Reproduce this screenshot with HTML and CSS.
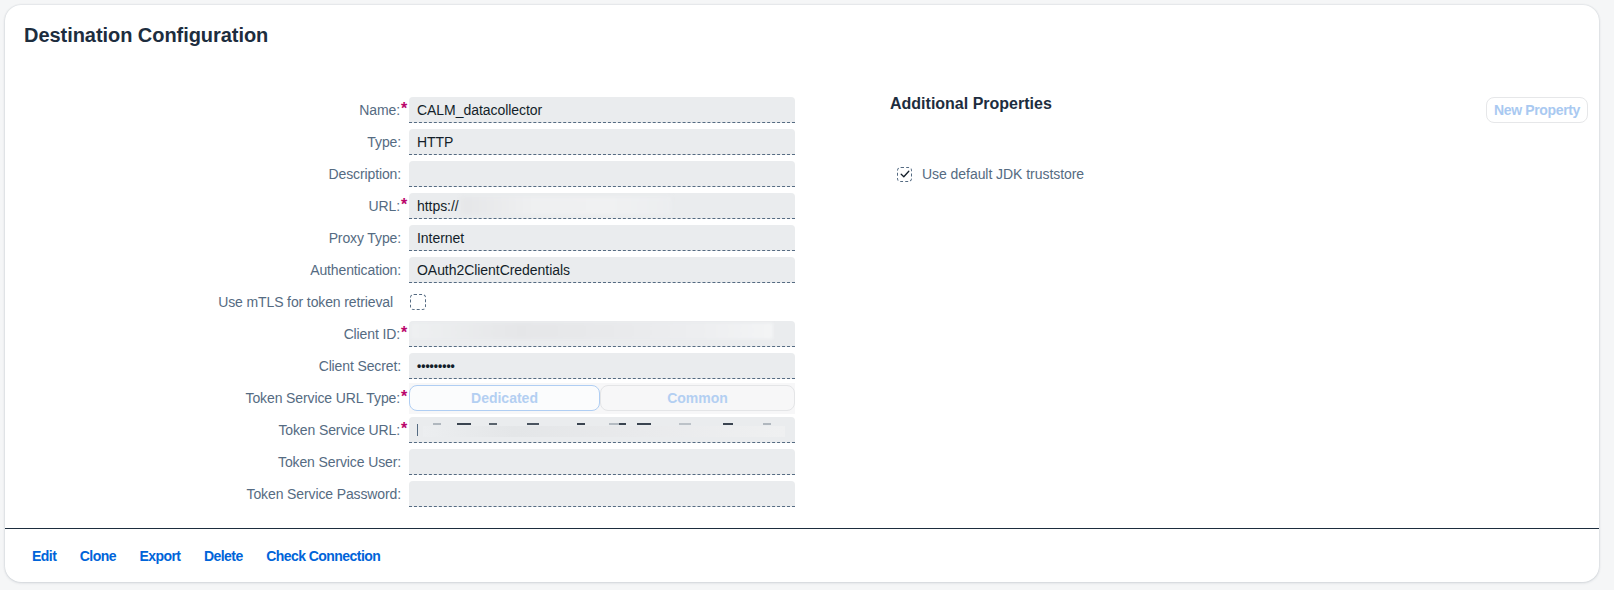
FILE: index.html
```html
<!DOCTYPE html>
<html lang="en">
<head>
<meta charset="utf-8">
<title>Destination Configuration</title>
<link rel="stylesheet" href="styles.css">
</head>
<body>
<div class="card">
  <header class="card-header">
    <h1 class="title">Destination Configuration</h1>
  </header>
  <div class="content">
    <div class="form">
      <div class="lbl req">Name:</div>
      <div class="field">CALM_datacollector</div>

      <div class="lbl">Type:</div>
      <div class="field">HTTP</div>

      <div class="lbl">Description:</div>
      <div class="field"></div>

      <div class="lbl req">URL:</div>
      <div class="field">https://<span class="smudge smudge-url"></span></div>

      <div class="lbl">Proxy Type:</div>
      <div class="field">Internet</div>

      <div class="lbl">Authentication:</div>
      <div class="field">OAuth2ClientCredentials</div>

      <div class="lbl lbl-check">Use mTLS for token retrieval</div>
      <div class="check-cell"><span class="cb"></span></div>

      <div class="lbl req">Client ID:</div>
      <div class="field"><span class="smudge smudge-id"></span></div>

      <div class="lbl">Client Secret:</div>
      <div class="field secret">•••••••••</div>

      <div class="lbl req">Token Service URL Type:</div>
      <div class="segmented">
        <span class="seg seg-selected">Dedicated</span>
        <span class="seg">Common</span>
      </div>

      <div class="lbl req">Token Service URL:</div>
      <div class="field"><span class="caret"></span><span class="smudge smudge-token"></span></div>

      <div class="lbl">Token Service User:</div>
      <div class="field"></div>

      <div class="lbl">Token Service Password:</div>
      <div class="field"></div>
    </div>

    <div class="side">
      <div class="side-head">
        <h2 class="side-title">Additional Properties</h2>
        <button class="btn-ghost" type="button" disabled>New Property</button>
      </div>
      <div class="check-row">
        <span class="cb">
          <svg width="12" height="12" viewBox="0 0 12 12" aria-hidden="true"><polyline points="2.2,6.3 4.8,8.8 9.8,3.2" fill="none" stroke="#131e29" stroke-width="1.3" stroke-linecap="round" stroke-linejoin="round"/></svg>
        </span>
        <span class="check-text">Use default JDK truststore</span>
      </div>
    </div>
  </div>
  <div class="divider"></div>
  <footer class="toolbar">
    <a class="link" href="#">Edit</a>
    <a class="link" href="#">Clone</a>
    <a class="link" href="#">Export</a>
    <a class="link" href="#">Delete</a>
    <a class="link" href="#">Check Connection</a>
  </footer>
</div>
</body>
</html>
```
FILE: styles.css
```css
* { box-sizing: border-box; }

html, body { height: 100%; }

body {
  margin: 0;
  padding: 5px 15px 8px 5px;
  background: #f5f6f7;
  font-family: "Liberation Sans", Arial, sans-serif;
  font-size: 14px;
  color: #131e29;
}

.card {
  height: 577px;
  background: #ffffff;
  border-radius: 16px;
  box-shadow: 0 0 2px rgba(34, 53, 72, 0.18), 0 1px 3px rgba(34, 53, 72, 0.12);
  display: flex;
  flex-direction: column;
}

.card-header {
  padding: 18px 19px 46px 19px;
}

.title {
  margin: 0;
  font-size: 20px;
  line-height: 24px;
  font-weight: 700;
  color: #1d2d3e;
  letter-spacing: -0.05px;
}

.content {
  display: flex;
  padding-bottom: 21px;
}

.form {
  width: 790px;
  padding-top: 4px;
  display: grid;
  grid-template-columns: 404px 386px;
  grid-auto-rows: 26px;
  row-gap: 6px;
}

.lbl {
  display: flex;
  align-items: center;
  justify-content: flex-end;
  padding-right: 8px;
  color: #556b82;
  letter-spacing: -0.12px;
  white-space: nowrap;
}

.lbl.req {
  padding-right: 0;
}

.lbl.req::after {
  content: "*";
  display: inline-block;
  width: 8px;
  margin-left: 1px;
  color: #ba066c;
  font-weight: 700;
  font-size: 16px;
  position: relative;
  top: -1px;
}

.lbl-check {
  padding-right: 16px;
}

.field {
  position: relative;
  display: flex;
  align-items: center;
  padding: 0 8px;
  background: #eaecee;
  border-radius: 4px 4px 0 0;
  border-bottom: 1px dashed #556b82;
  color: #131e29;
  letter-spacing: -0.05px;
  white-space: nowrap;
  overflow: hidden;
}

.secret {
  font-size: 12px;
  font-weight: 700;
  letter-spacing: 0;
}

.smudge {
  position: absolute;
  pointer-events: none;
}

.smudge-url {
  left: 52px;
  top: 4px;
  width: 210px;
  height: 18px;
  background: linear-gradient(90deg, #e5e6e8 0%, #eff0f1 35%, #f0f1f2 70%, #eceef0 100%);
  filter: blur(2px);
}

.smudge-id {
  left: 2px;
  top: 2px;
  width: 362px;
  height: 16px;
  background: linear-gradient(90deg, #eef0f1 0%, #e5e6e8 30%, #e8e9eb 55%, #edeef0 80%, #f3f4f5 100%);
  filter: blur(1.5px);
}

.caret {
  position: absolute;
  left: 8px;
  top: 7px;
  width: 1px;
  height: 12px;
  background: #556b82;
}

.smudge-token {
  left: 14px;
  top: 6px;
  width: 362px;
  height: 14px;
  background:
    linear-gradient(90deg, transparent 0 10px, #b0b7be 10px 18px, transparent 18px 34px, #3a4450 34px 48px, transparent 48px 66px, #5a646e 66px 74px, transparent 74px 104px, #4a5460 104px 116px, transparent 116px 154px, #3a4450 154px 162px, transparent 162px 186px, #b4bbc2 186px 196px, #3a4450 196px 203px, transparent 203px 214px, #3a4450 214px 228px, transparent 228px 256px, #bcc2c8 256px 268px, transparent 268px 300px, #3a4450 300px 310px, transparent 310px 340px, #b0b7be 340px 348px, transparent 348px) top / 100% 2px no-repeat,
    linear-gradient(90deg, #eceef0 0%, #e4e6e8 25%, #e9eaec 60%, #eff0f1 100%) 0 3px / 100% 11px no-repeat;
  filter: blur(0.6px);
}

.check-cell {
  display: flex;
  align-items: center;
  padding-left: 1px;
}

.cb {
  width: 16px;
  height: 16px;
  border: 1px dashed #556b82;
  border-radius: 4px;
  display: inline-flex;
  align-items: center;
  justify-content: center;
  flex: none;
}

.segmented {
  display: flex;
  background: #f7f7f8;
  box-shadow: 0 -2px 0 #f7f7f8, 0 3px 0 #f7f7f8;
}

.seg {
  flex: 1;
  display: flex;
  align-items: center;
  justify-content: center;
  border: 1px solid #e4e5e7;
  border-radius: 8px;
  font-weight: 700;
  color: #b3cff2;
  letter-spacing: 0;
}

.seg-selected {
  flex: 0 0 191px;
  border-color: #b0cef3;
  background: #fbfcfd;
}

.side {
  flex: 1;
  margin-left: 95px;
  padding-right: 11px;
}

.side-head {
  display: flex;
  justify-content: space-between;
  align-items: flex-start;
}

.side-title {
  margin: 0;
  padding-top: 1px;
  font-size: 16px;
  line-height: 20px;
  font-weight: 700;
  color: #1d2d3e;
  letter-spacing: 0;
}

.btn-ghost {
  margin-top: 4px;
  height: 26px;
  padding: 0 7px;
  border: 1px solid #e6e7e9;
  border-radius: 8px;
  background: #ffffff;
  font-family: inherit;
  font-size: 14px;
  font-weight: 700;
  color: #a9c9f1;
  letter-spacing: -0.35px;
}

.check-row {
  display: flex;
  align-items: center;
  margin-top: 43px;
  padding-left: 7px;
  height: 16px;
}

.check-row .cb {
  width: 15px;
  height: 15px;
}

.check-text {
  margin-left: 10px;
  color: #556b82;
  letter-spacing: -0.05px;
}

.divider {
  height: 1px;
  background: #1d2d3e;
}

.toolbar {
  flex: 1;
  display: flex;
  align-items: center;
  gap: 23.5px;
  padding-left: 27px;
}

.link {
  color: #0064d9;
  font-weight: 700;
  text-decoration: none;
  letter-spacing: -0.55px;
}
```
